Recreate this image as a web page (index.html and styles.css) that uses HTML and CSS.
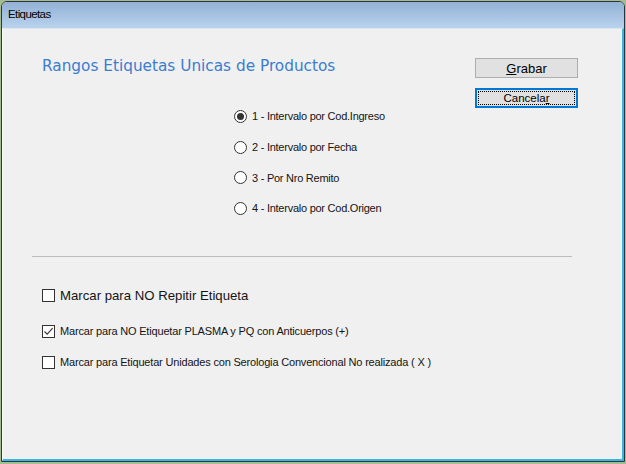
FILE: index.html
```html
<!DOCTYPE html>
<html lang="es">

<head>
    <meta charset="UTF-8">
    <meta name="viewport" content="width=device-width, initial-scale=1.0">
    <title>Etiquetas</title>
    <link rel="stylesheet" href="styles.css">
</head>

<body>
    <div class="window">
        <div class="titlebar">Etiquetas</div>
        <div class="client">
            <div class="top">
                <div class="left">
                    <h1 class="heading">Rangos Etiquetas Unicas de Productos</h1>
                    <div class="radios">
                        <label class="radio-row">
                            <span class="radio checked"></span>1 - Intervalo por Cod.Ingreso
                        </label>
                        <label class="radio-row">
                            <span class="radio"></span>2 - Intervalo por Fecha
                        </label>
                        <label class="radio-row">
                            <span class="radio"></span>3 - Por Nro Remito
                        </label>
                        <label class="radio-row">
                            <span class="radio"></span>4 - Intervalo por Cod.Origen
                        </label>
                    </div>
                </div>
                <div class="buttons">
                    <button class="btn"><u>G</u>rabar</button>
                    <button class="btn focused"><span class="focus-rect">Cancela<u>r</u></span></button>
                </div>
            </div>
            <div class="separator"></div>
            <div class="checks">
                <label class="check-row big">
                    <span class="box"></span>Marcar para NO Repitir Etiqueta
                </label>
                <label class="check-row">
                    <span class="box">
                        <svg width="11" height="11" viewBox="0 0 11 11">
                            <path d="M1.5 5.5 L4.2 8.2 L9.6 2.2" fill="none" stroke="#3b3b3b" stroke-width="1.2"/>
                        </svg>
                    </span>Marcar para NO Etiquetar PLASMA y PQ con Anticuerpos (+)
                </label>
                <label class="check-row">
                    <span class="box"></span>Marcar para Etiquetar Unidades con Serologia Convencional No realizada ( X )
                </label>
            </div>
        </div>
    </div>
</body>

</html>
```

FILE: styles.css
```css
* {
    box-sizing: border-box;
}

body {
    margin: 0;
    width: 626px;
    height: 464px;
    background-color: #a5bb90;
    font-family: 'Liberation Sans', Arial, sans-serif;
    font-size: 11px;
    color: #141414;
    overflow: hidden;
}

.window {
    margin: 1px 0 0 1px;
    width: 624px;
    height: 461px;
    border: 1px solid #2e3440;
    border-radius: 6px 6px 0 0;
    background: #f0f0f0;
    display: flex;
    flex-direction: column;
    overflow: hidden;
}

.titlebar {
    height: 26px;
    padding: 6px 0 0 6px;
    background: linear-gradient(#92b1d5, #b9d3ee);
    font-family: 'Liberation Sans', Arial, sans-serif;
    font-size: 11.5px;
    letter-spacing: -0.6px;
    color: #000;
}

.client {
    flex: 1;
    border-left: 1px solid #fafafa;
    border-right: 2px solid #36b8e0;
    border-bottom: 2px solid #36b8e0;
    border-top: 1px solid #dfe6ee;
}

.top {
    display: flex;
    justify-content: space-between;
    padding: 0 44px 0 39px;
}

.heading {
    margin: 28px 0 0 0;
    font-family: 'DejaVu Sans', Verdana, sans-serif;
    font-weight: normal;
    font-size: 15.3px;
    color: #3b7ccf;
}

.radios {
    margin: 26px 0 0 192px;
    display: flex;
    flex-direction: column;
    letter-spacing: -0.25px;
}

.radio-row {
    height: 30.7px;
    display: flex;
    align-items: center;
}

.radio {
    width: 13px;
    height: 13px;
    margin-right: 5px;
    border: 1px solid #333;
    border-radius: 50%;
    background: #fff;
    display: flex;
    align-items: center;
    justify-content: center;
}

.radio.checked::after {
    content: '';
    width: 7px;
    height: 7px;
    border-radius: 50%;
    background: #333;
}

.buttons {
    margin-top: 29px;
    display: flex;
    flex-direction: column;
    gap: 10px;
}

.btn {
    width: 103px;
    height: 20px;
    padding: 0;
    border: 1px solid #adadad;
    background: #e1e1e1;
    font-family: 'Liberation Sans', Arial, sans-serif;
    font-size: 13px;
    color: #000;
}

.btn.focused {
    border: 2px solid #0078d7;
    font-size: 11.5px;
    padding: 1px;
}

.focus-rect {
    display: block;
    height: 100%;
    border: 1px dotted #000;
    line-height: 12px;
}

.separator {
    margin: 32px 50px 0 29px;
    border-top: 1px solid #bcbcbc;
}

.checks {
    margin: 23px 0 0 39px;
    display: flex;
    flex-direction: column;
    letter-spacing: -0.18px;
}

.check-row {
    height: 31px;
    display: flex;
    align-items: center;
}

.check-row.big {
    font-size: 13.2px;
    letter-spacing: 0;
    height: 32px;
    margin-bottom: 4px;
}

.box {
    width: 13px;
    height: 13px;
    margin-right: 5px;
    border: 1px solid #333;
    background: #fff;
    display: flex;
    align-items: center;
    justify-content: center;
}
```
